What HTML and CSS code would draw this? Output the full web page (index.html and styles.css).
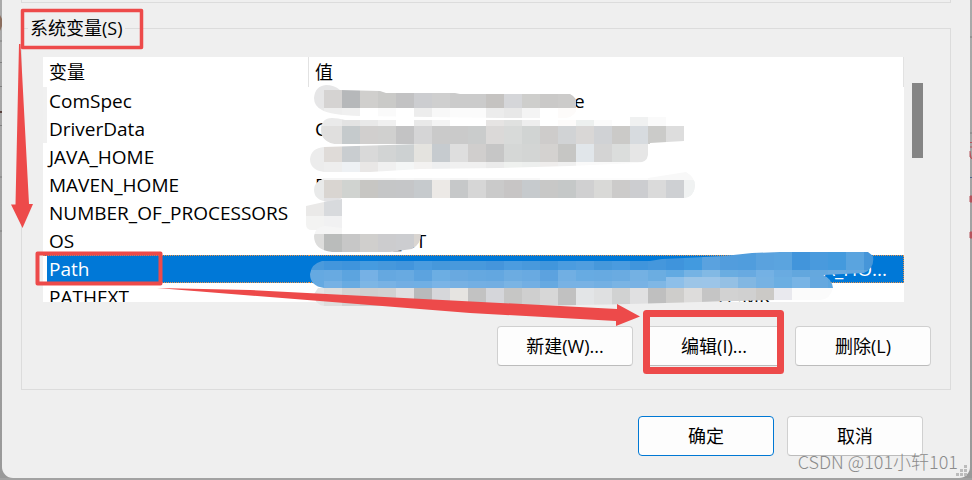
FILE: index.html
```
<!DOCTYPE html>
<html lang="zh-CN">
<head>
<meta charset="utf-8">
<title>环境变量</title>
<link rel="stylesheet" href="styles.css">
</head>
<body>
<main class="dialog">
  <div class="previous-group"></div>
  <fieldset class="group">
    <legend>系统变量(S)</legend>
    <div class="list">
      <div class="viewport">
        <table class="variables">
          <thead><tr><th class="name" scope="col">变量</th><th scope="col">值</th></tr></thead>
          <tbody>
            <tr><td>ComSpec</td><td><span class="value-end">e</span></td></tr>
            <tr><td>DriverData</td><td>C</td></tr>
            <tr><td>JAVA_HOME</td><td></td></tr>
            <tr><td>MAVEN_HOME</td><td>E</td></tr>
            <tr><td>NUMBER_OF_PROCESSORS</td><td></td></tr>
            <tr><td>OS</td><td><span class="value-os">_NT</span></td></tr>
            <tr class="selected"><td>Path</td><td class="cut">A_HO...</td></tr>
            <tr><td>PATHEXT</td><td><span class="value-ext">H;.MK</span></td></tr>
          </tbody>
        </table>
      </div>
      <div class="scrollbar"></div>
    </div>
    <div class="actions">
      <button type="button">新建(W)...</button>
      <button type="button">编辑(I)...</button>
      <button type="button">删除(L)</button>
    </div>
  </fieldset>
  <div class="actions footer">
    <button type="button" class="primary">确定</button>
    <button type="button">取消</button>
  </div>
</main>
<svg class="marks" width="972" height="480" viewBox="0 0 972 480" aria-hidden="true">
  <defs>
    <clipPath id="s1"><path d="M326 85Q334 85 340 90L380 91L386 93H455L460 94H570Q577 97 577 106Q577 116 566 118H500L360 116Q330 115 322 110Q314 106 314 98Q315 86 326 85Z"/></clipPath>
    <clipPath id="s2"><path d="M332 118Q338 118 345 120H630V117H666V126H684V141L650 143V145H345Q321 145 321 130Q321 118 332 118Z"/></clipPath>
    <clipPath id="s3"><path d="M324 147L420 144H648V155Q647 163 636 163L570 166L500 168L420 169L370 172H324Q310 170 310 159Q311 148 324 147Z"/></clipPath>
    <clipPath id="s4"><path d="M319 181L324 178H648L686 172Q695 177 695 186Q694 197 684 198H342Q336 202 328 202Q314 200 314 190Q314 184 319 181Z"/></clipPath>
    <clipPath id="s5"><path d="M306 206L324 202L342 199V230H312Q306 230 306 224Z"/></clipPath>
    <clipPath id="s6"><path d="M325 226L342 228V234H421Q421 244 412 249L390 252H332Q314 250 314 236Q315 227 325 226Z"/></clipPath>
    <clipPath id="s7"><path d="M322 261H650L662 259L684 258L724 256L752 253L780 252H868L873 256Q875 268 864 273L823 275Q832 279 833 288H324Q310 286 310 274Q311 264 322 261Z"/></clipPath>
    <clipPath id="s8"><path d="M318 288H833Q830 300 820 300H775L700 302L630 304L530 306H324Q314 304 314 294Z"/></clipPath>
  </defs>
  <path d="M43 87h4v56h-4z" fill="#f0f0f0"/>
  <g id="mosaic"></g>
  <g fill="none" stroke="#ed4a4a" stroke-linejoin="round">
    <rect x="22.5" y="10.5" width="119" height="37" stroke-width="3.5"/>
    <rect x="37.5" y="253.5" width="123" height="30" stroke-width="4"/>
    <rect x="646.5" y="313.5" width="134" height="57" stroke-width="7"/>
  </g>
  <path d="M19 44h1.5L29 204h4L22.500 228L11 204.500h4.500Z" fill="#ed4a4a"/>
  <path d="M157 288L250 290L617 309V304L640 316.500L616 326V321L470 313Z" fill="#ed4a4a"/>
  <g>
    <path d="M0 15l2 4v7l-2 5z" fill="#8b6e5e"/>
    <path d="M0 111h2v2H0z" fill="#57403c"/>
    <path d="M0 41h2M0 62.500h2M0 86.500h2M0 125.500h2M0 177h2M0 231h2M970 37h2M970 133h2" stroke="#7f7f7f"/>
    <path d="M970 142.500h2M970 147h2M970 151v6l2 2M970 196h2v6h-2zM970 232h2v6h-2z" stroke="#b5555c" fill="#b5555c"/>
    <path d="M970 177.500h2" stroke="#50658d"/>
    <path d="M162 478h13v2h-13z" fill="#7f7f7f"/>
  </g>
  <path d="M964 465h3v3h-3zM960 469h3v3h-3zM964 469h3v3h-3zM956 473h3v3h-3zM960 473h3v3h-3zM964 473h3v3h-3z" fill="#bcbcbc"/>
</svg>
<div class="watermark">CSDN @101小轩101</div>
<script src="mosaic.js"></script>
</body>
</html>
```
FILE: styles.css
```
* { box-sizing: border-box; }
body {
  margin: 0;
  position: relative;
  background: linear-gradient(#aaa, #999);
  color: #000;
  font: 18px/24px "Open Sans", "Noto Sans CJK SC", sans-serif;
}
.dialog {
  margin: 0 2px;
  padding: 0 19px 22px;
  background: #efefef;
  border-radius: 0 0 11px 11px;
}
html { background: #a2a2a2; }
.previous-group {
  height: 3px;
  margin-bottom: 13px;
  border: 1px solid #dcdcdc;
  border-top: 0;
}
.group {
  min-width: 0;
  margin: 0;
  padding: 17px 19px 23px 21px;
  border: 1px solid #dcdcdc;
}
legend {
  height: 24px;
  margin-left: -15px;
  padding: 0 2px;
}
.list {
  display: flex;
  gap: 8px;
  padding-right: 8px;
}
.viewport {
  flex: 1;
  height: 245px;
  overflow: hidden;
  background: #fff;
}
.variables {
  width: 100%;
  table-layout: fixed;
  border-collapse: separate;
  border-spacing: 0;
}
th, td {
  height: 28px;
  padding: 0 6px;
  line-height: 28px;
  text-align: left;
  font-weight: normal;
  white-space: nowrap;
}
td { font-size: 19px; }
th {
  height: 30px;
  border-right: 1px solid #e2e2e2;
}
.name { width: 266px; }
.selected td {
  color: #fff;
  background: #0078d7;
  border: 1px dotted #e8924a;
  border-width: 1px 0;
  line-height: 26px;
}
.selected td:first-child { box-shadow: inset 4px 0 #fff; }
.selected .cut {
  padding-right: 16px;
  border-right-width: 1px;
  text-align: right;
}
.value-end { margin-left: 259px; }
.value-os { margin-left: 78px; }
.value-ext { margin-left: 403px; }
.scrollbar {
  width: 11px;
  height: 75px;
  margin-top: 26px;
  background: #858585;
}
.actions {
  display: flex;
  justify-content: flex-end;
  gap: 13px;
  margin-top: 24px;
}
.footer {
  margin-top: 26px;
  padding-right: 28px;
}
button {
  width: 136px;
  height: 40px;
  padding: 0;
  color: inherit;
  font: inherit;
  background: #fdfdfd;
  border: 1px solid #d0d0d0;
  border-bottom-color: #bcbcbc;
  border-radius: 4px;
}
.primary { border-color: #0078d4; }
.marks {
  position: absolute;
  top: 0;
  left: 0;
}
.watermark {
  position: absolute;
  right: 14px;
  bottom: 5px;
  color: #8b8b8b;
  font: 300 18px/24px "Noto Sans CJK SC", sans-serif;
}
```
FILE: mosaic.js
```
// Each band: clip shape, first x, top, height, then one colour per 18px cell.
const bands = [
  ["s1", 306, 84, 6, "e6e6e7 e6e6e7 e0e0e0"],
  ["s1", 306, 90, 18, "e6e6e7 d5d3d2 b6b8ba d0cfcd cacac8 c2c2c3 cccdd0 cfcfcf cbcbcb cbcbcb c5c3c1 d5d6d9 cececc cac9c8 cccbca"],
  ["s1", 306, 108, 10, "e9e9e9 eeeeee f0f0f0 ffffff fafafa ffffff ededed f8f8f8 fbfbfb fbfbfb ececec e8e8e8 f4f4f4 ffffff fdfbfa"],
  ["s2", 306, 117, 9, "ececec eaeaea e3e3e3 e9e9e9 f0f0f0 ffffff e9e9e9 f4f4f4 ffffff ffffff e6e4e3 e0e1e0 eeeeee ffffff fdfbfa edf0ef fbfbfb ffffff f0f1f1 fafafa"],
  ["s2", 306, 126, 18, "e0e0df e0dfde c5cacc d1cfce d0d0cf c3c3c4 d5d5d6 cacaca cacaca cacccc dbd9d8 d8dad9 d1d4d3 cecccb d1d3d5 d9d7d6 d0d2d5 cbcac8 d7dbdf cbcbc9 dddddd"],
  ["s3", 306, 144, 18, "ececec dfdbd8 c9cdd0 d9d9d9 d2d4d4 cdd1d2 e4e3df c6cbcf dedede d0cecd c6c6c6 d5d7d6 d3d5d4 d4d2d0 c6c6c4 e1e6ea d4d4d4 dbdddc e6e6e6"],
  ["s3", 306, 162, 10, "ececec eeeeee eef1f4 e9e7e6 f0f0f0 f4f6f6 f3f2f1 eeeff0 f0f0f0 f0f0f0 ebebeb eff1ef edefee efedec f0f0f0 fafafa fafafa fafafa fafafa"],
  ["s4", 306, 172, 8, "efefef f5f5f5 f5f5f5 f5f5f5 f5f5f5 f7f7f7 f5f5f5 f7f7f7 f5f5f5 f7f7f7 f7f7f7 f7f7f7 f7f7f7 fcfcfc fcfcfc fcfcfc fcfcfc fcfcfc fcfcfc f8f8f8 f8f8f8 f8f8f8"],
  ["s4", 306, 180, 18, "e9eaea d9d5d1 d0d3d0 c7c6c3 c5c6c7 c5c6c8 c6cacd ece9e6 c6c8c9 d6d6d6 cacaca c7c5c5 c6cacd c8c8c7 c5c8c8 d0d0d1 d9d9d7 cccbca cccdd0 dadada dad9d8 f0f2f2"],
  ["s4", 666, 180, 18, "ced0d3 f0f2f2"],
  ["s4", 306, 198, 5, "eaeaea e2e2e4"],
  ["s5", 306, 198, 18, "eae9e8 d8dadd"],
  ["s5", 306, 216, 14, "f3f3f2 f1f1f2"],
  ["s6", 306, 226, 8, "f5f5f5 f5f5f5"],
  ["s6", 306, 234, 18, "dddddc babcbb c7c7c7 d0cfcd ccccce cccdd0 d9d5d1 d5d6dc"],
  ["s7", 306, 252, 18, "4a9adc 4396dc 3f94dc 469bdf 4698dc 4295dc 4b9cdf 4698db 4899dc 4899dc 4595db 4c9cdf 4899dc 4196dc 4b9cdf 509edf 4698db 4a9bdf 4095dc 4597dc 3f94dc 429adf 5aa2df 529ddd 509ddd 5aa2de 5ba4df 4295db 499add 449add 5aa4df 4696d9"],
  ["s7", 306, 270, 11, "65a9e1 68aae1 5ca4df 76b1e5 65a8e0 68aae1 5ca3df 6caee3 69a9e0 65a8e0 63a7e0 6cace1 69aae1 5ca2df 71afe3 67abe2 67aae1 6aabe1 74b1e3 6bade1 62aae2 75b3e4 82b9e4 6aade1 68aae1 74b1e4 69abe1 62a7de 65a8de 6aaadf 66a8df 5ca2dc"],
  ["s7", 306, 281, 7, "65a9e1 76b1e4 68abe2 7db6e5 78b2e4 72aee3 70afe4 7ab4e6 77b1e3 73afe3 72aee2 7ab4e4 73afe3 66a9e1 78b2e4 78b2e4 73b0e3 7ab4e4 78b2e4 7fb7e5 8fc0e9"],
  ["s7", 666, 277, 11, "8dbfe9 9cc5e7 9cc5e8 94c0e4 82b7e2 76b2e3 6baee2 78b4e5 65a8df 5da6df"],
  ["s8", 306, 288, 18, "e5e5e5 dededd d3d3d3 cfcfcf d1d1d1 e0dfe0 b8babb d6d7da e6e4e1 c2c2c2 d5d6da c6c6c5 cfcfcf d7d7d7 c1c1c1 e3e5e7 dfe0e1 d1d2d2 e0e0e1 bfbfbf cecdcb dddcdb c5c5c5 d2d2d2 d0d0d0 cbc9c6 e9e9ee fbfbfb fbfbfb fbfbfb"]
];

const layer = document.getElementById("mosaic");
for (const [clip, left, top, height, colours] of bands) {
  const group = document.createElementNS("http://www.w3.org/2000/svg", "g");
  group.setAttribute("clip-path", `url(#${clip})`);
  group.setAttribute("shape-rendering", "crispEdges");
  colours.split(" ").forEach((colour, i) => {
    const cell = document.createElementNS("http://www.w3.org/2000/svg", "rect");
    cell.setAttribute("x", left + i * 18);
    cell.setAttribute("y", top);
    cell.setAttribute("width", 18);
    cell.setAttribute("height", height);
    cell.setAttribute("fill", "#" + colour);
    group.append(cell);
  });
  layer.append(group);
}
```
